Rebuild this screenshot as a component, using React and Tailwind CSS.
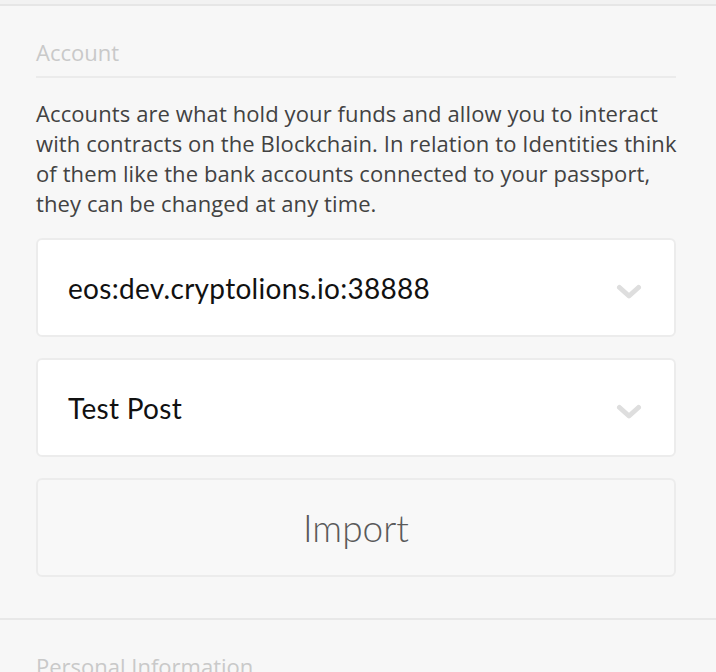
import React from "react";

function Chevron() {
  return (
    <svg width="26" height="16" viewBox="0 0 26 16" className="shrink-0 mt-[8px]">
      <path d="M3.5 3.5 L13 12 L22.5 3.5" fill="none" stroke="#dedede" strokeWidth="5" strokeLinecap="round" strokeLinejoin="round" />
    </svg>
  );
}

function Select({ value }) {
  return (
    <div className="h-[99px] bg-white border-2 border-[#ececec] rounded-[6px] flex items-center justify-between pl-[30px] pr-[32px]">
      <span className="text-[28px] text-[#111] tracking-[0.3px]" style={{ fontFamily: "Lato, 'Open Sans', sans-serif", fontWeight: 400 }}>{value}</span>
      <Chevron />
    </div>
  );
}

export default function App() {
  return (
    <div className="w-full h-[672px] bg-[#f7f7f7] overflow-hidden" style={{ fontFamily: "'Open Sans', sans-serif" }}>
      <div className="h-[4px] bg-[#f2f2f2]" />
      <div className="h-[2px] bg-[#e6e6e6]" />
      <div className="pl-[36px] pr-[40px] pt-[32px]">
        <div className="text-[22px] leading-[28px] text-[#c9c9c9]">Account</div>
        <div className="mt-[10px] h-[2px] bg-[#ebebeb]" />
        <p className="mt-[20px] mr-[-8px] text-[22px] leading-[30px] text-[#424242] tracking-[0.1px]">
          Accounts are what hold your funds and allow you to interact with contracts on the Blockchain. In relation to Identities think of them like the bank accounts connected to your passport, they can be changed at any time.
        </p>
        <div className="mt-[20px] flex flex-col gap-[21px]">
          <Select value="eos:dev.cryptolions.io:38888" />
          <Select value="Test Post" />
          <div className="h-[99px] bg-[#f8f8f8] border-2 border-[#ececec] rounded-[6px] flex items-center justify-center">
            <span className="text-[37px] text-[#5a5a5a]" style={{ fontFamily: "Lato, 'Open Sans', sans-serif", fontWeight: 300 }}>Import</span>
          </div>
        </div>
      </div>
      <div className="mt-[41px] h-[2px] bg-[#e8e8e8]" />
      <div className="px-[36px] pt-[32px]">
        <div className="text-[22px] leading-[28px] text-[#c9c9c9]">Personal Information</div>
      </div>
    </div>
  );
}
